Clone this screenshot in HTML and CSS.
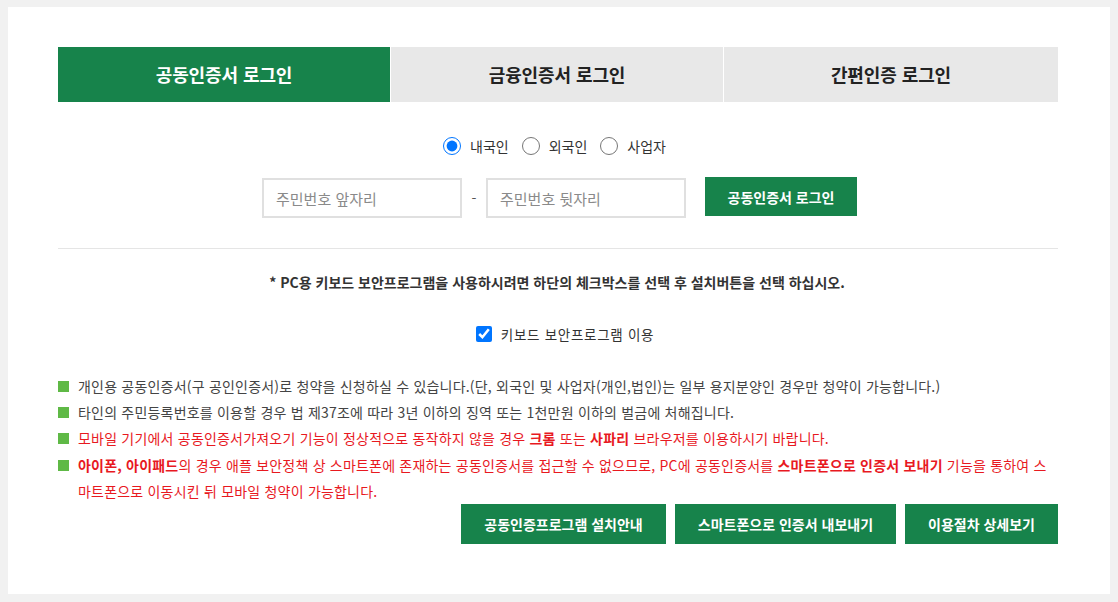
FILE: index.html
```html
<!DOCTYPE html>
<html lang="ko">
<head>
<meta charset="utf-8">
<title>공동인증서 로그인</title>
<link rel="stylesheet" href="styles.css">
</head>
<body>
<div class="panel">
  <div class="tabs">
    <div class="tab active">공동인증서 로그인</div>
    <div class="tab">금융인증서 로그인</div>
    <div class="tab">간편인증 로그인</div>
  </div>

  <div class="radios">
    <label class="radio"><input type="radio" name="kind" checked> 내국인</label>
    <label class="radio"><input type="radio" name="kind"> 외국인</label>
    <label class="radio"><input type="radio" name="kind"> 사업자</label>
  </div>

  <div class="idrow">
    <input class="idinput" type="text" placeholder="주민번호 앞자리">
    <span class="dash">-</span>
    <input class="idinput" type="password" placeholder="주민번호 뒷자리">
    <button class="btn login">공동인증서 로그인</button>
  </div>

  <hr class="divider">

  <p class="note">* PC용 키보드 보안프로그램을 사용하시려면 하단의 체크박스를 선택 후 설치버튼을 선택 하십시오.</p>

  <label class="check"><input type="checkbox" checked> 키보드 보안프로그램 이용</label>

  <ul class="bullets">
    <li>개인용 공동인증서(구 공인인증서)로 청약을 신청하실 수 있습니다.(단, 외국인 및 사업자(개인,법인)는 일부 용지분양인 경우만 청약이 가능합니다.)</li>
    <li>타인의 주민등록번호를 이용할 경우 법 제37조에 따라 3년 이하의 징역 또는 1천만원 이하의 벌금에 처해집니다.</li>
    <li class="red">모바일 기기에서 공동인증서가져오기 기능이 정상적으로 동작하지 않을 경우 <b>크롬</b> 또는 <b>사파리</b> 브라우저를 이용하시기 바랍니다.</li>
    <li class="red"><b>아이폰, 아이패드</b>의 경우 애플 보안정책 상 스마트폰에 존재하는 공동인증서를 접근할 수 없으므로, PC에 공동인증서를 <b>스마트폰으로 인증서 보내기</b> 기능을 통하여 스마트폰으로 이동시킨 뒤 모바일 청약이 가능합니다.</li>
  </ul>

  <div class="actions">
    <button class="btn action">공동인증프로그램 설치안내</button>
    <button class="btn action">스마트폰으로 인증서 내보내기</button>
    <button class="btn action">이용절차 상세보기</button>
  </div>
</div>
</body>
</html>
```

FILE: styles.css
```css
* { box-sizing: border-box; }

html, body {
  margin: 0;
  padding: 0;
}

body {
  background: #f1f1f1;
  padding: 7px 8px 8px;
  font-family: "Noto Sans CJK KR", "Noto Sans", sans-serif;
  font-size: 14px;
  color: #333;
}

.panel {
  background: #fff;
  height: 587px;
  padding: 40px 52px 0 50px;
}

.tabs {
  display: grid;
  grid-template-columns: 332px 332px 334px;
  column-gap: 1px;
}

.tab {
  height: 55px;
  line-height: 55px;
  text-align: center;
  font-size: 18px;
  font-weight: 700;
  letter-spacing: -0.1px;
  background: #e8e8e8;
  color: #222;
}

.tab.active {
  background: #17834b;
  color: #fff;
}

.radios {
  display: flex;
  justify-content: center;
  align-items: center;
  gap: 13px;
  margin-top: 34px;
  height: 20px;
  padding-right: 7px;
}

.radio {
  display: flex;
  align-items: center;
  gap: 9px;
  font-size: 14px;
  color: #333;
}

.radio input {
  width: 18px;
  height: 18px;
  margin: 0;
}

.idrow {
  display: flex;
  justify-content: center;
  align-items: flex-start;
  margin-top: 21px;
  padding-left: 3px;
}

.idinput {
  width: 200px;
  height: 40px;
  border: 2px solid #e0e0e0;
  padding: 0 12px;
  font-family: inherit;
  font-size: 15px;
  color: #333;
  outline: none;
  margin-top: 1px;
}

.idinput::placeholder {
  color: #8a8a8a;
}

.dash {
  width: 24px;
  text-align: center;
  line-height: 42px;
  color: #555;
}

.btn {
  border: 0;
  background: #17834b;
  color: #fff;
  font-family: inherit;
  font-size: 14px;
  font-weight: 700;
  height: 40px;
  cursor: pointer;
}

.login {
  width: 152px;
  height: 39px;
  margin-left: 19px;
}

.divider {
  border: 0;
  border-top: 1px solid #e5e5e5;
  margin: 29px 0 0;
}

.note {
  margin: 23px 0 0;
  text-align: center;
  font-weight: 700;
  line-height: 20px;
  color: #333;
  padding-right: 2px;
}

.check {
  display: flex;
  justify-content: center;
  align-items: center;
  gap: 9px;
  margin-top: 32px;
  height: 20px;
  padding-left: 14px;
  font-size: 13.5px;
  letter-spacing: 0.7px;
}

.check input {
  width: 16px;
  height: 16px;
  margin: 0;
}

.bullets {
  list-style: none;
  margin: 29px 0 0;
  padding: 0;
}

.bullets li {
  position: relative;
  padding-left: 20px;
  line-height: 26.2px;
  color: #444;
  letter-spacing: 0.2px;
}

.bullets li::before {
  content: "";
  position: absolute;
  left: 0;
  top: 8px;
  width: 11px;
  height: 11px;
  background: #5fb946;
}

.bullets li.red {
  color: #e8191f;
}

.bullets li.red b {
  font-weight: 700;
}

.actions {
  display: flex;
  justify-content: flex-end;
  gap: 9px;
  margin-top: 0;
}

.action {
  padding: 0 23px;
}
```
